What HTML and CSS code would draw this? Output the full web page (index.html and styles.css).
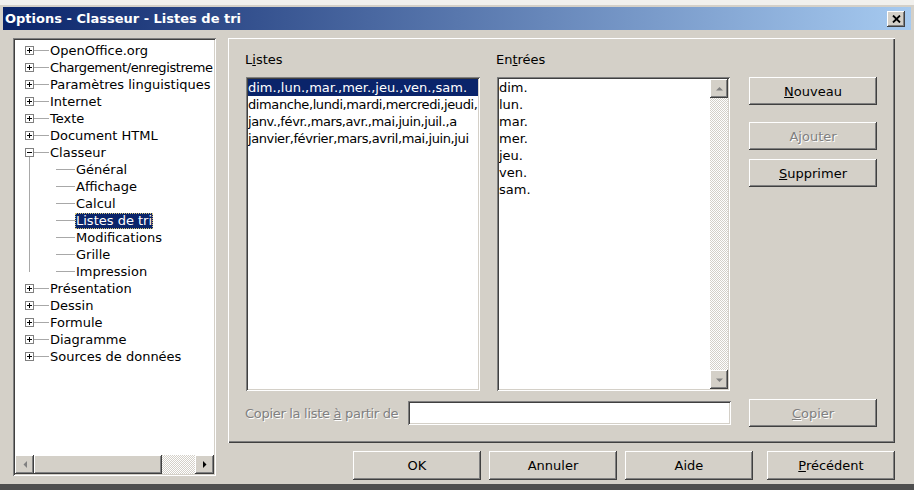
FILE: index.html
```html
<!DOCTYPE html>
<html lang="fr">
<head>
  <meta charset="UTF-8">
  <title>Options - Classeur - Listes de tri</title>
  <link rel="stylesheet" href="styles.css">
</head>
<body>
  <div class="window">
    <div class="titlebar">
      <span class="title">Options - Classeur - Listes de tri</span>
      <button class="close-btn raised" title="Fermer">
        <svg width="9" height="8" viewBox="0 0 9 8"><path d="M1 0.5 L8 7.5 M8 0.5 L1 7.5" stroke="#000" stroke-width="1.8"/></svg>
      </button>
    </div>

    <div class="main">
      <div class="tree sunken">
        <ul class="tree-list">
          <li class="row"><span class="twisty plus"></span><span class="stem"></span><span class="label">OpenOffice.org</span></li>
          <li class="row"><span class="twisty plus"></span><span class="stem"></span><span class="label tight">Chargement/enregistreme</span></li>
          <li class="row"><span class="twisty plus"></span><span class="stem"></span><span class="label">Paramètres linguistiques</span></li>
          <li class="row"><span class="twisty plus"></span><span class="stem"></span><span class="label">Internet</span></li>
          <li class="row"><span class="twisty plus"></span><span class="stem"></span><span class="label">Texte</span></li>
          <li class="row"><span class="twisty plus"></span><span class="stem"></span><span class="label">Document HTML</span></li>
          <li class="node">
            <div class="row"><span class="twisty minus"></span><span class="stem"></span><span class="label">Classeur</span></div>
            <ul class="children">
              <li class="row"><span class="stub"></span><span class="label">Général</span></li>
              <li class="row"><span class="stub"></span><span class="label">Affichage</span></li>
              <li class="row"><span class="stub"></span><span class="label">Calcul</span></li>
              <li class="row"><span class="stub"></span><span class="label selected">Listes de tri</span></li>
              <li class="row"><span class="stub"></span><span class="label">Modifications</span></li>
              <li class="row"><span class="stub"></span><span class="label">Grille</span></li>
              <li class="row"><span class="stub"></span><span class="label">Impression</span></li>
            </ul>
          </li>
          <li class="row"><span class="twisty plus"></span><span class="stem"></span><span class="label">Présentation</span></li>
          <li class="row"><span class="twisty plus"></span><span class="stem"></span><span class="label">Dessin</span></li>
          <li class="row"><span class="twisty plus"></span><span class="stem"></span><span class="label">Formule</span></li>
          <li class="row"><span class="twisty plus"></span><span class="stem"></span><span class="label">Diagramme</span></li>
          <li class="row"><span class="twisty plus"></span><span class="stem"></span><span class="label">Sources de données</span></li>
        </ul>
        <div class="hscroll">
          <div class="sb-btn raised">
            <svg width="4" height="7" viewBox="0 0 4 7"><polygon points="4,0 0.5,3.5 4,7" fill="#808080"/></svg>
          </div>
          <div class="sb-thumb raised"></div>
          <div class="sb-track"></div>
          <div class="sb-btn raised">
            <svg width="4" height="7" viewBox="0 0 4 7"><polygon points="0,0 3.5,3.5 0,7" fill="#000"/></svg>
          </div>
        </div>
      </div>

      <div class="right">
        <div class="panel">
          <div class="lists">
            <div class="col-list">
              <div class="field-label">L<u>i</u>stes</div>
              <div class="listbox sunken">
                <div class="item selected">dim.,lun.,mar.,mer.,jeu.,ven.,sam.</div>
                <div class="item tight">dimanche,lundi,mardi,mercredi,jeudi,</div>
                <div class="item tight">janv.,févr.,mars,avr.,mai,juin,juil.,a</div>
                <div class="item tight">janvier,février,mars,avril,mai,juin,jui</div>
              </div>
            </div>
            <div class="col-entries">
              <div class="field-label">En<u>t</u>rées</div>
              <div class="listbox entries sunken">
                <div class="entries-items">
                  <div class="item">dim.</div>
                  <div class="item">lun.</div>
                  <div class="item">mar.</div>
                  <div class="item">mer.</div>
                  <div class="item">jeu.</div>
                  <div class="item">ven.</div>
                  <div class="item">sam.</div>
                </div>
                <div class="vscroll">
                  <div class="sb-btn raised">
                    <svg width="7" height="4" viewBox="0 0 7 4"><polygon points="3.5,0 7,3.5 0,3.5" fill="#808080"/></svg>
                  </div>
                  <div class="sb-track"></div>
                  <div class="sb-btn raised">
                    <svg width="7" height="4" viewBox="0 0 7 4"><polygon points="0,0.5 7,0.5 3.5,4" fill="#808080"/></svg>
                  </div>
                </div>
              </div>
            </div>
            <div class="col-buttons">
              <button class="btn raised"><u>N</u>ouveau</button>
              <button class="btn raised btn-add" disabled>A<u>j</u>outer</button>
              <button class="btn raised btn-del"><u>S</u>upprimer</button>
            </div>
          </div>

          <div class="copy-row">
            <span class="copy-label">Copier la liste <u>à</u> partir de</span>
            <input class="copy-input sunken" type="text" disabled>
            <button class="btn raised" disabled><u>C</u>opier</button>
          </div>
        </div>

        <div class="dialog-buttons">
          <button class="btn btn-lg raised">OK</button>
          <button class="btn btn-lg raised gap-s">Annuler</button>
          <button class="btn btn-lg raised gap-s">Aide</button>
          <button class="btn btn-lg raised gap-l"><u>P</u>récédent</button>
        </div>
      </div>
    </div>
  </div>
</body>
</html>
```

FILE: styles.css
```css
body {
  margin: 0;
  background: #4e4e4e;
  font-family: "DejaVu Sans", sans-serif;
  font-size: 13px;
  color: #000;
}
.window {
  box-sizing: border-box;
  width: 914px;
  height: 484px;
  background: #d4d0c8;
  border-top: 5px solid #f1f0ed;
  padding: 2px 3px 0;
}
.raised {
  background: #d4d0c8;
  box-shadow: inset -1px -1px #404040, inset 1px 1px #fff, inset -2px -2px #808080, inset 2px 2px #d4d0c8;
}
.sunken {
  background: #fff;
  box-shadow: inset 1px 1px #808080, inset -1px -1px #fff, inset 2px 2px #404040, inset -2px -2px #d4d0c8;
}
.tight {
  letter-spacing: -0.4px;
}

/* title bar */
.titlebar {
  display: flex;
  align-items: center;
  justify-content: space-between;
  height: 23px;
  padding-left: 2px;
  background: linear-gradient(to right, #0a246a, #a6caf0);
}
.title {
  color: #fff;
  font-weight: bold;
  font-size: 13px;
}
.close-btn {
  width: 18px;
  height: 16px;
  margin-right: 6px;
  border: 0;
  padding: 0;
  display: flex;
  align-items: center;
  justify-content: center;
}

.main {
  display: flex;
  gap: 12px;
  padding: 8px 16px 0 10px;
}

/* tree */
.tree {
  box-sizing: border-box;
  width: 203px;
  height: 438px;
  padding: 2px;
  display: flex;
  flex-direction: column;
}
.tree-list {
  flex: 1;
  list-style: none;
  margin: 0;
  padding: 2px 0 0;
  overflow: hidden;
  white-space: nowrap;
}
.row {
  display: flex;
  align-items: center;
  height: 17px;
}
.twisty {
  flex: none;
  box-sizing: border-box;
  width: 9px;
  height: 9px;
  margin-left: 10px;
  border: 1px solid #808080;
  background: linear-gradient(#000, #000) center / 5px 1px no-repeat, #fff;
}
.twisty.plus {
  background: linear-gradient(#000, #000) center / 5px 1px no-repeat,
              linear-gradient(#000, #000) center / 1px 5px no-repeat, #fff;
}
.stem {
  flex: none;
  width: 15px;
  height: 1px;
  background: #a8a8a8;
}
.label {
  padding: 0 1px;
  line-height: 16px;
}
.label.selected {
  background: #0a246a;
  color: #fff;
  outline: 1px dotted #d8c878;
  outline-offset: -1px;
}
.children {
  position: relative;
  list-style: none;
  margin: 0 0 0 14px;
  padding: 0;
}
.children::before {
  content: "";
  position: absolute;
  left: 0;
  top: -4px;
  bottom: 8px;
  width: 1px;
  background: #a8a8a8;
}
.children .row {
  padding-left: 27px;
}
.stub {
  flex: none;
  width: 19px;
  height: 1px;
  background: #a8a8a8;
}

/* scrollbars */
.hscroll {
  flex: none;
  display: flex;
  height: 19px;
}
.sb-btn {
  flex: none;
  width: 19px;
  height: 19px;
  display: flex;
  align-items: center;
  justify-content: center;
}
.sb-thumb {
  flex: none;
  width: 128px;
}
.sb-track {
  flex: 1;
  background: repeating-conic-gradient(#fff 0 25%, #d4d0c8 0 50%) 0 0 / 2px 2px;
}
.vscroll {
  flex: none;
  width: 18px;
  display: flex;
  flex-direction: column;
}
.vscroll .sb-btn {
  width: 18px;
  height: 19px;
}

/* options page */
.panel {
  box-sizing: border-box;
  height: 405px;
  padding: 14px 18px 0;
  box-shadow: inset 1px 1px #fff, inset -1px -1px #404040, inset -2px -2px #808080;
}
.lists {
  display: flex;
}
.col-list {
  width: 234px;
  margin-right: 17px;
}
.col-entries {
  width: 233px;
  margin-right: 19px;
}
.col-buttons {
  width: 128px;
  padding-top: 25px;
  display: flex;
  flex-direction: column;
}
.field-label {
  line-height: 16px;
  margin: 0 0 9px -1px;
}
.listbox {
  box-sizing: border-box;
  height: 314px;
  padding: 2px;
  overflow: hidden;
}
.listbox .item {
  height: 17px;
  line-height: 17px;
  white-space: nowrap;
  overflow: hidden;
}
.item.selected {
  background: #0a246a;
  color: #fff;
}
.listbox.entries {
  display: flex;
}
.entries-items {
  flex: 1;
  min-width: 0;
}

.btn {
  box-sizing: border-box;
  width: 128px;
  height: 28px;
  border: 0;
  padding: 0;
  font: inherit;
  color: #000;
}
.btn:disabled {
  color: #808080;
  text-shadow: 1px 1px #fff;
}
.btn-add {
  margin-top: 17px;
}
.btn-del {
  margin-top: 9px;
}

.copy-row {
  display: flex;
  align-items: center;
  margin-top: 8px;
}
.copy-label {
  width: 163px;
  margin-left: -1px;
  color: #808080;
  text-shadow: 1px 1px #fff;
  letter-spacing: -0.3px;
  white-space: nowrap;
}
.copy-input {
  flex: 1;
  min-width: 0;
  height: 24px;
  margin-right: 18px;
  border: 0;
  padding: 0 3px;
  font: inherit;
}

.dialog-buttons {
  display: flex;
  justify-content: flex-end;
  margin-top: 8px;
}
.btn-lg {
  height: 29px;
}
.gap-s {
  margin-left: 8px;
}
.gap-l {
  margin-left: 14px;
}
```
